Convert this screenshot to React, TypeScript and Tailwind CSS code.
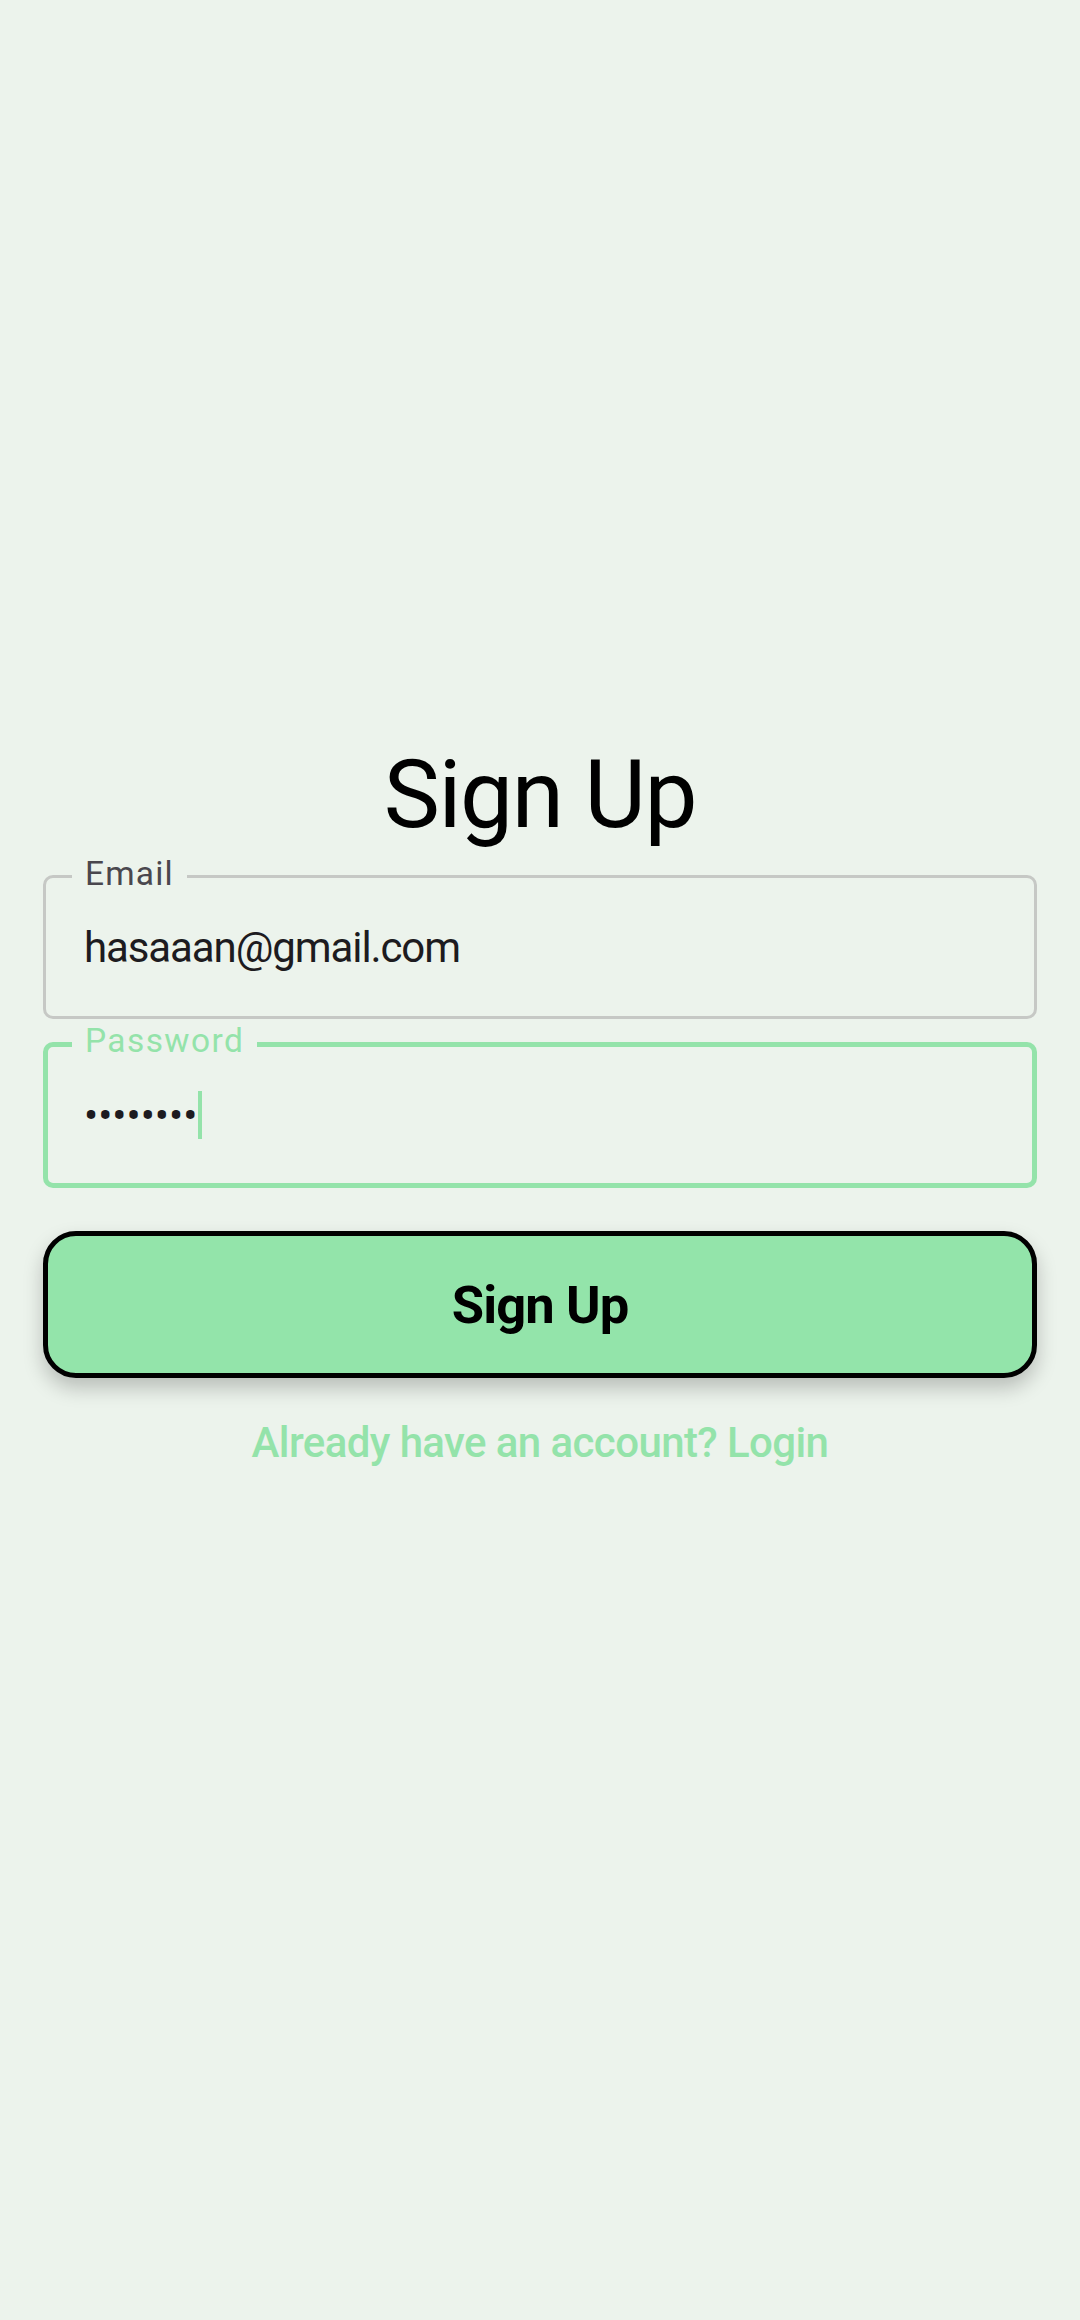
export default function App() {
  return (
    <div
      className="min-h-[2320px] w-full bg-[#ecf3ec] flex flex-col px-[43px] pt-[739px]"
      style={{ fontFamily: "Roboto, 'Noto Sans', sans-serif" }}
    >
      {/* Title */}
      <h1 className="text-center text-[94.5px] leading-[111px] tracking-[-1.4px] text-black font-normal">
        Sign Up
      </h1>

      {/* Email field */}
      <div className="relative mt-[25px] h-[144px] border-[3px] border-[#c6c8c5] rounded-[10px] flex items-center pl-[38px]">
        <span className="absolute top-[-21px] left-[26px] px-[13px] bg-[#ecf3ec] text-[33.5px] leading-[34px] tracking-[1.2px] text-[#4a474e]">
          Email
        </span>
        <span className="text-[42px] leading-[49px] tracking-[-1.1px] text-[#1d1b20]">
          hasaaan@gmail.com
        </span>
      </div>

      {/* Password field (focused) */}
      <div className="relative mt-[23px] h-[146px] border-[5px] border-[#94e3aa] rounded-[10px] flex items-center pl-[36px]">
        <span className="absolute top-[-23px] left-[24px] px-[13px] bg-[#ecf3ec] text-[33.5px] leading-[34px] tracking-[1.4px] text-[#94e3aa]">
          Password
        </span>
        <span className="text-[42px] leading-[49px] text-[#1d1b20] flex items-center">
          ••••••••
          <span className="inline-block w-[4px] h-[48px] bg-[#94e3aa] ml-[1px]" />
        </span>
      </div>

      {/* Button */}
      <button className="mt-[43px] h-[147px] w-full rounded-[33px] border-[5px] border-black bg-[#93e4aa] shadow-[0_10px_20px_rgba(0,0,0,0.22)] flex items-center justify-center">
        <span className="text-[52.5px] leading-[62px] tracking-[-0.9px] font-bold text-black">
          Sign Up
        </span>
      </button>

      {/* Link */}
      <p className="mt-[40px] text-center text-[42px] leading-[49px] tracking-[-0.6px] font-medium text-[#94e3aa]">
        Already have an account? Login
      </p>
    </div>
  );
}
